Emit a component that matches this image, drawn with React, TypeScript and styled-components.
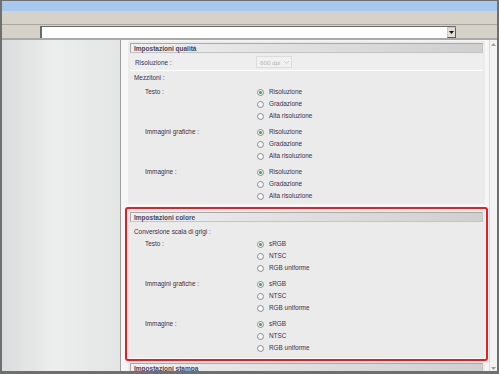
import React from "react";
import styled, { createGlobalStyle } from "styled-components";

const Global = createGlobalStyle`
  html, body { margin: 0; padding: 0; width: 499px; height: 374px; overflow: hidden; background: #fff; }
  body { font-family: "Liberation Sans", Arial, sans-serif; }
  * { box-sizing: border-box; }
`;

const Window = styled.div`
  width: 499px;
  height: 374px;
  display: flex;
  flex-direction: column;
  border-style: solid;
  border-color: #6f6f6f;
  border-width: 1px 2px 3px 2px;
  background: #d4d0c8;
  overflow: hidden;
`;

const TitleBar = styled.div`
  height: 10px;
  flex: none;
  background: #a7c9ef;
`;

const MenuBar = styled.div`
  height: 14px;
  flex: none;
  background: #d6d2ca;
  border-bottom: 1px solid #aaa69e;
`;

const AddressBar = styled.div`
  height: 15px;
  flex: none;
  display: flex;
  align-items: flex-start;
  padding: 1px 0 0 38px;
  background: #d6d2ca;
  border-bottom: 2px solid #a9a9a9;
`;

const AddressInput = styled.div`
  width: 416px;
  height: 12px;
  display: flex;
  justify-content: flex-end;
  background: #fff;
  border-style: solid;
  border-width: 1px 0 0 2px;
  border-color: #6a6a6a;
`;

const DropButton = styled.div`
  width: 9px;
  height: 11px;
  display: flex;
  align-items: center;
  justify-content: center;
  background: #e2dfd8;
  border: 1px solid #5e5e5e;
  border-top-color: #c8c8c8;
  border-left-color: #c8c8c8;
`;

const Main = styled.div`
  flex: 1;
  display: flex;
  min-height: 0;
`;

const Sidebar = styled.div`
  width: 119px;
  flex: none;
  background: linear-gradient(90deg, #dadddd 0%, #eceeed 45%, #e4e5e5 100%);
  border-right: 1px solid #9e9e9e;
`;

const Content = styled.div`
  flex: 1;
  display: flex;
  flex-direction: column;
  gap: 3px;
  padding: 1px 4px 0 7px;
  background: #f6f6f6;
  overflow: hidden;
`;

const Scrollbar = styled.div`
  width: 8px;
  flex: none;
  display: flex;
  flex-direction: column;
  justify-content: space-between;
  align-items: center;
  padding: 3px 0 1px;
  background: #f3f3f3;
  border-left: 1px solid #dadada;
`;

const Section = styled.section<{ $highlight?: boolean; $tail?: number }>`
  position: relative;
  flex: none;
  background: #ebebeb;
  padding: 2px 2px ${(p) => p.$tail ?? 2}px;
  margin-top: ${(p) => (p.$highlight ? 3 : 0)}px;
  ${(p) =>
    p.$highlight &&
    `
    &::after {
      content: "";
      position: absolute;
      inset: -3px;
      border: 2px solid #ec1c24;
      border-radius: 3px;
      box-shadow: inset 0 0 0 1px #ffffff;
      pointer-events: none;
    }
  `}
`;

const Header = styled.div`
  height: 10px;
  display: flex;
  align-items: center;
  padding-left: 3px;
  font-size: 6.5px;
  font-weight: bold;
  color: #46465a;
  background: linear-gradient(90deg, #efefef 0%, #e2e2e2 40%, #cfcfcf 100%);
  border: 1px solid #a9a9a9;
  border-right-color: #c4c4c4;
  border-bottom-color: #c4c4c4;
`;

const SettingRow = styled.div`
  height: 17px;
  margin-top: 1px;
  display: grid;
  grid-template-columns: 121px auto;
  align-items: center;
  padding-left: 5px;
  font-size: 6.4px;
  color: #3a2e4e;
  background: #eeeeee;
  border-bottom: 1px solid #ffffff;
`;

const DisabledSelect = styled.div`
  width: 36px;
  height: 12px;
  display: flex;
  align-items: center;
  justify-content: space-between;
  padding: 0 2px 0 3px;
  font-size: 6.2px;
  color: #b4b4b4;
  background: #f1f1f1;
  border: 1px solid #dcdcdc;
`;

const SubTitle = styled.div<{ $gap: number }>`
  height: 12px;
  line-height: 12px;
  margin-top: ${(p) => p.$gap}px;
  padding-left: 4px;
  font-size: 6.4px;
  color: #3a2e4e;
`;

const Groups = styled.div<{ $gap: number }>`
  display: flex;
  flex-direction: column;
  gap: 4px;
  margin-top: ${(p) => p.$gap}px;
`;

const Group = styled.div`
  display: grid;
  grid-template-columns: 112px 1fr;
  padding-left: 15px;
  font-size: 6.4px;
  color: #3a2e4e;
`;

const GroupLabel = styled.div`
  height: 12px;
  line-height: 12px;
`;

const Options = styled.div`
  display: flex;
  flex-direction: column;
`;

const Option = styled.label`
  height: 12px;
  display: flex;
  align-items: center;
  gap: 5px;
  line-height: 12px;
`;

const Radio = styled.span<{ $on?: boolean }>`
  width: 7px;
  height: 7px;
  flex: none;
  display: flex;
  align-items: center;
  justify-content: center;
  border-radius: 50%;
  border: 1px solid #8b909a;
  background: radial-gradient(circle at 40% 40%, #ffffff 0%, #e8e8e8 100%);
  &::after {
    content: "";
    width: 3px;
    height: 3px;
    border-radius: 50%;
    background: ${(p) => (p.$on ? "#3aa63a" : "transparent")};
  }
`;

type GroupData = { label: string; options: string[] };

const halftone = ["Risoluzione", "Gradazione", "Alta risoluzione"];
const color = ["sRGB", "NTSC", "RGB uniforme"];

const qualityGroups: GroupData[] = [
  { label: "Testo :", options: halftone },
  { label: "Immagini grafiche :", options: halftone },
  { label: "Immagine :", options: halftone },
];

const colorGroups: GroupData[] = [
  { label: "Testo :", options: color },
  { label: "Immagini grafiche :", options: color },
  { label: "Immagine :", options: color },
];

function RadioGroups({ groups, gap }: { groups: GroupData[]; gap: number }) {
  return (
    <Groups $gap={gap}>
      {groups.map((g) => (
        <Group key={g.label}>
          <GroupLabel>{g.label}</GroupLabel>
          <Options>
            {g.options.map((o, i) => (
              <Option key={o}>
                <Radio $on={i === 0} />
                {o}
              </Option>
            ))}
          </Options>
        </Group>
      ))}
    </Groups>
  );
}

const Arrow = ({ dir }: { dir: "up" | "down" }) => (
  <svg width="5" height="3" viewBox="0 0 5 3">
    <path d={dir === "up" ? "M0 3 L2.5 0 L5 3 Z" : "M0 0 L2.5 3 L5 0 Z"} fill="#a0a0a0" />
  </svg>
);

export default function App() {
  return (
    <>
      <Global />
      <Window>
        <TitleBar />
        <MenuBar />
        <AddressBar>
          <AddressInput>
            <DropButton>
              <svg width="5" height="3" viewBox="0 0 5 3">
                <path d="M0 0 L5 0 L2.5 3 Z" fill="#111" />
              </svg>
            </DropButton>
          </AddressInput>
        </AddressBar>
        <Main>
          <Sidebar />
          <Content>
            <Section $tail={2}>
              <Header>Impostazioni qualità</Header>
              <SettingRow>
                <span>Risoluzione :</span>
                <DisabledSelect>
                  <span>600 dpi</span>
                  <svg width="5" height="3" viewBox="0 0 5 3">
                    <path d="M0 0 L2.5 2.5 L5 0" fill="none" stroke="#c4c4c4" strokeWidth="0.9" />
                  </svg>
                </DisabledSelect>
              </SettingRow>
              <SubTitle $gap={1}>Mezzitoni :</SubTitle>
              <RadioGroups groups={qualityGroups} gap={2} />
            </Section>
            <Section $highlight $tail={4}>
              <Header>Impostazioni colore</Header>
              <SubTitle $gap={4}>Conversione scala di grigi :</SubTitle>
              <RadioGroups groups={colorGroups} gap={0} />
            </Section>
            <Section>
              <Header>Impostazioni stampa</Header>
            </Section>
          </Content>
          <Scrollbar>
            <Arrow dir="up" />
            <Arrow dir="down" />
          </Scrollbar>
        </Main>
      </Window>
    </>
  );
}
